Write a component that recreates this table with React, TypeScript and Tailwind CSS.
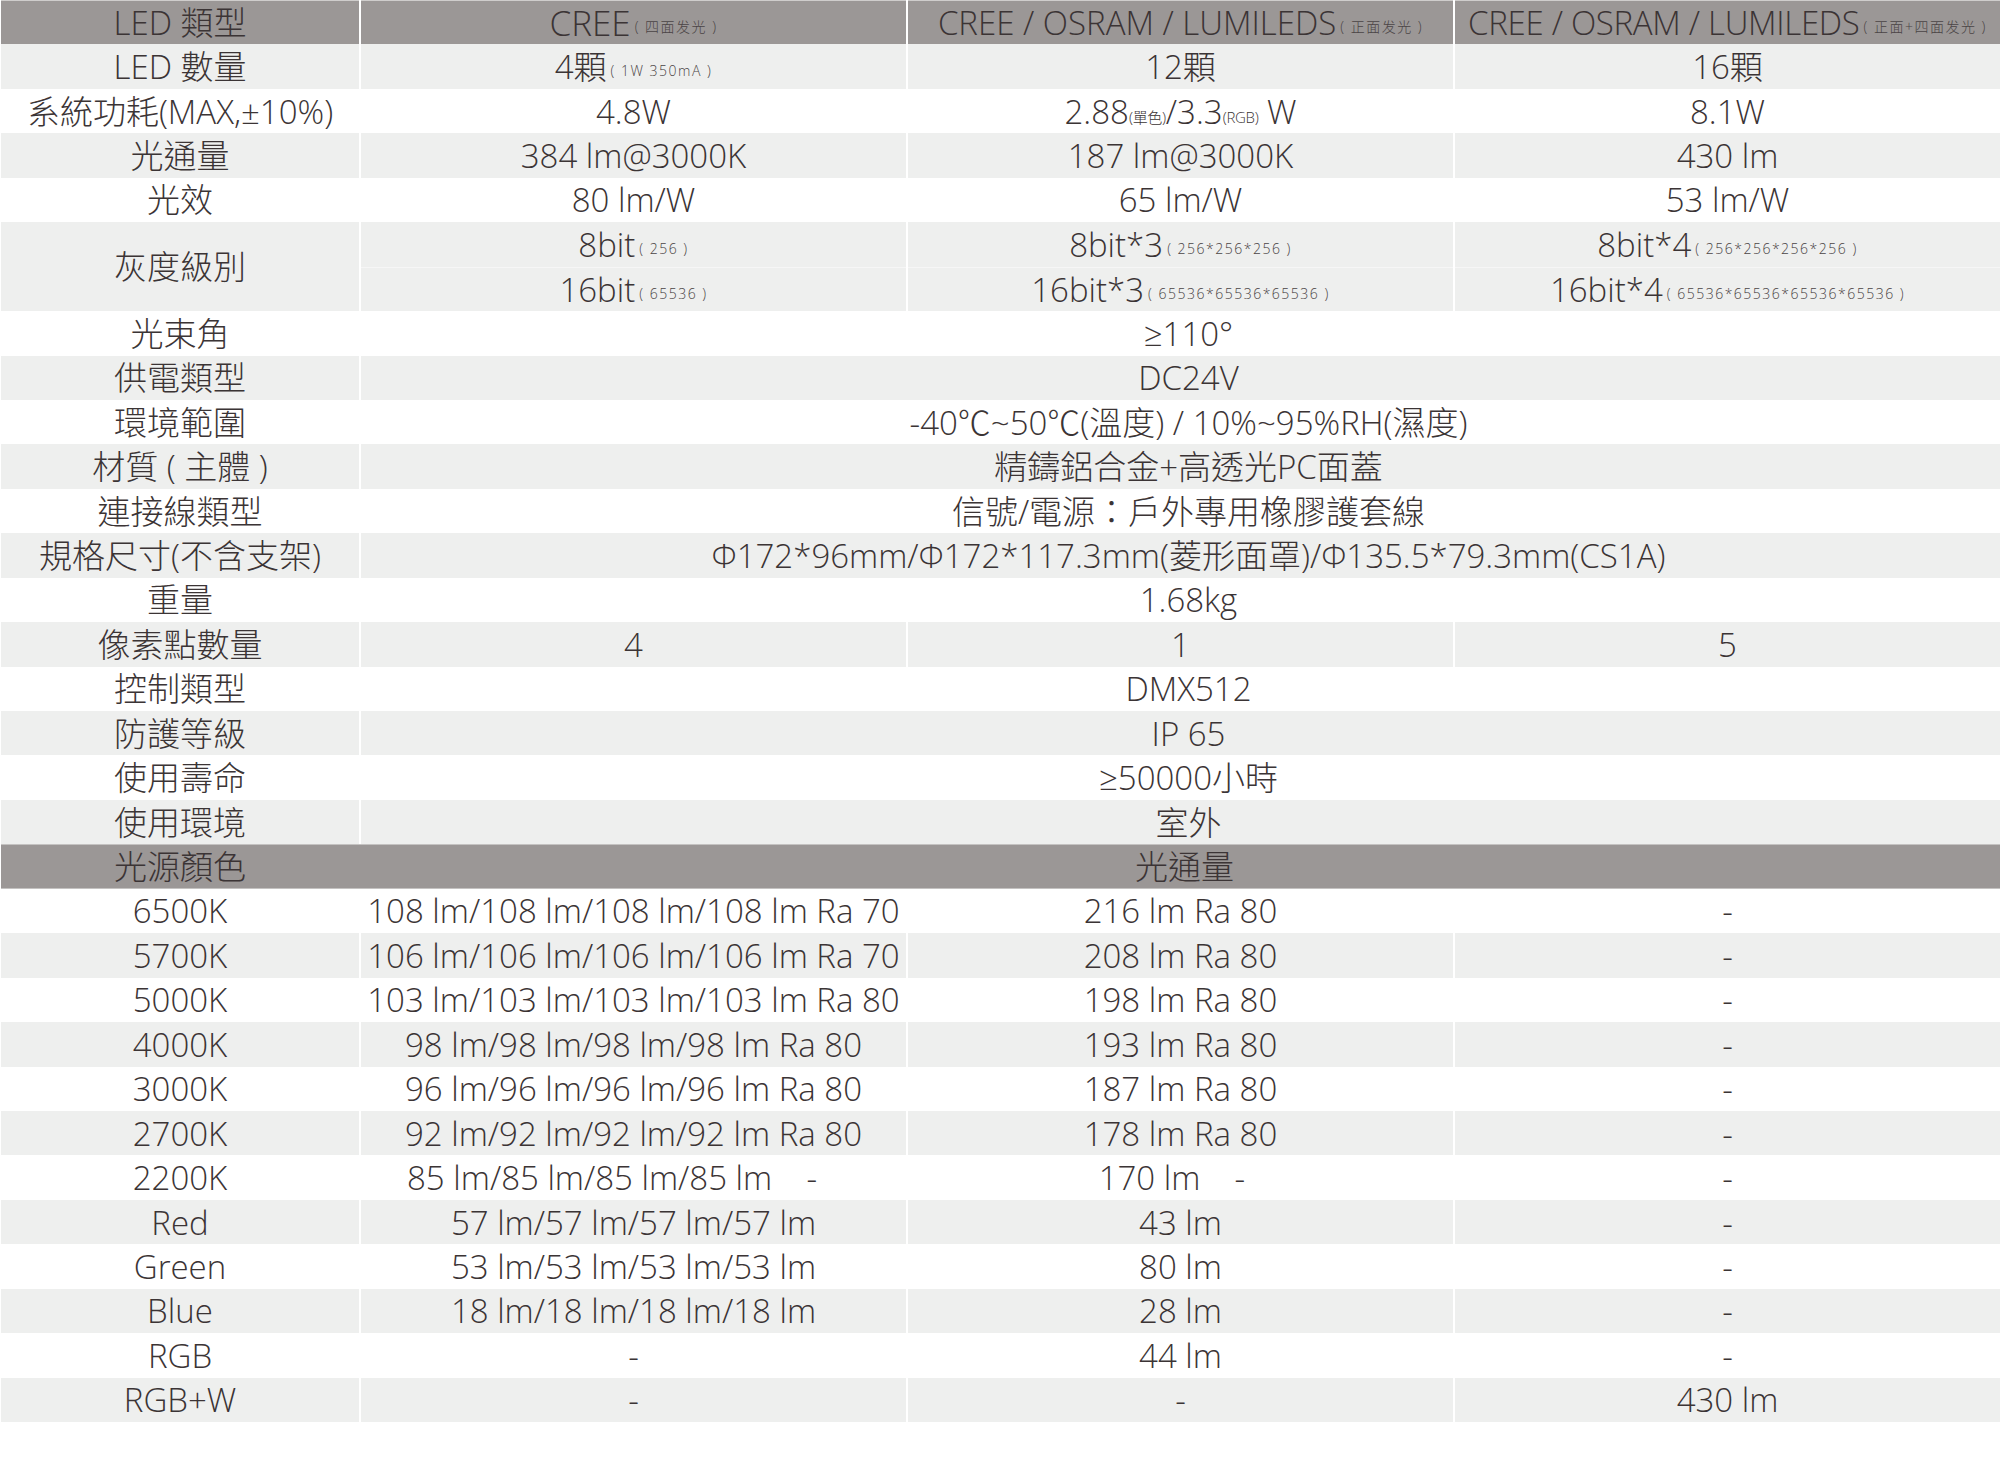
import type { ReactNode } from 'react';

const GRAY = 'bg-[#eeefee]';
const HEAD = 'bg-[#9b9796]';

function Cell({
  children,
  bg,
  className = '',
}: {
  children?: ReactNode;
  bg?: string;
  className?: string;
}) {
  return (
    <div className={`flex items-center justify-center whitespace-pre ${bg ?? ''} ${className}`}>
      {children}
    </div>
  );
}

function Small({ children }: { children: ReactNode }) {
  return (
    <span className="text-[14px] tracking-[1.5px] ml-[4px] mt-[9px] text-[#4a4445]">
      {children}
    </span>
  );
}

function Sub({ children }: { children: ReactNode }) {
  return <span className="text-[15px] self-end mb-[8px] tracking-[-0.3px]">{children}</span>;
}

export default function App() {
  const merged: [string, ReactNode][] = [
    ['光束角', '≥110°'],
    ['供電類型', 'DC24V'],
    ['環境範圍', '-40℃~50℃(溫度) / 10%~95%RH(濕度)'],
    ['材質 ( 主體 )', '精鑄鋁合金+高透光PC面蓋'],
    ['連接線類型', '信號/電源：戶外專用橡膠護套線'],
    ['規格尺寸(不含支架)', 'Φ172*96mm/Φ172*117.3mm(菱形面罩)/Φ135.5*79.3mm(CS1A)'],
    ['重量', '1.68kg'],
  ];

  const tail: [string, string][] = [
    ['控制類型', 'DMX512'],
    ['防護等級', 'IP 65'],
    ['使用壽命', '≥50000小時'],
    ['使用環境', '室外'],
  ];

  const colours: [string, string, string, string][] = [
    ['6500K', '108 lm/108 lm/108 lm/108 lm Ra 70', '216 lm Ra 80', '-'],
    ['5700K', '106 lm/106 lm/106 lm/106 lm Ra 70', '208 lm Ra 80', '-'],
    ['5000K', '103 lm/103 lm/103 lm/103 lm Ra 80', '198 lm Ra 80', '-'],
    ['4000K', '98 lm/98 lm/98 lm/98 lm Ra 80', '193 lm Ra 80', '-'],
    ['3000K', '96 lm/96 lm/96 lm/96 lm Ra 80', '187 lm Ra 80', '-'],
    ['2700K', '92 lm/92 lm/92 lm/92 lm Ra 80', '178 lm Ra 80', '-'],
    ['2200K', '85 lm/85 lm/85 lm/85 lm    -     ', '170 lm    -  ', '-'],
    ['Red', '57 lm/57 lm/57 lm/57 lm', '43 lm', '-'],
    ['Green', '53 lm/53 lm/53 lm/53 lm', '80 lm', '-'],
    ['Blue', '18 lm/18 lm/18 lm/18 lm', '28 lm', '-'],
    ['RGB', '-', '44 lm', '-'],
    ['RGB+W', '-', '-', '430 lm'],
  ];

  return (
    <div className="w-[2002px] h-[1475px] bg-white pl-[1px] font-['Open_Sans','Noto_Sans_CJK_TC',sans-serif] font-light text-[33px] leading-none text-[#3b3435]">
      <div className="grid grid-cols-[358px_545px_545px_545px] gap-x-[2px] auto-rows-[44.45px]">
        {/* header */}
        <Cell bg={HEAD} className="border-t border-[#cfcdcc]">LED 類型</Cell>
        <Cell bg={HEAD} className="border-t border-[#cfcdcc]">
          <span className="text-[35px]">CREE</span>
          <Small>( 四面发光 )</Small>
        </Cell>
        <Cell bg={HEAD} className="border-t border-[#cfcdcc]">
          CREE / OSRAM / LUMILEDS<Small>( 正面发光 )</Small>
        </Cell>
        <Cell bg={HEAD} className="border-t border-[#cfcdcc] tracking-[-0.3px]">
          CREE / OSRAM / LUMILEDS<Small>( 正面+四面发光 )</Small>
        </Cell>

        <Cell bg={GRAY}>LED 數量</Cell>
        <Cell bg={GRAY}>4顆<Small>( 1W 350mA )</Small></Cell>
        <Cell bg={GRAY}>12顆</Cell>
        <Cell bg={GRAY}>16顆</Cell>

        <Cell>系統功耗(MAX,±10%)</Cell>
        <Cell>4.8W</Cell>
        <Cell>
          2.88<Sub>(單色)</Sub>/3.3<Sub>(RGB)</Sub> W
        </Cell>
        <Cell>8.1W</Cell>

        <Cell bg={GRAY}>光通量</Cell>
        <Cell bg={GRAY}>384 lm@3000K</Cell>
        <Cell bg={GRAY}>187 lm@3000K</Cell>
        <Cell bg={GRAY}>430 lm</Cell>

        <Cell>光效</Cell>
        <Cell>80 lm/W</Cell>
        <Cell>65 lm/W</Cell>
        <Cell>53 lm/W</Cell>

        <Cell bg={GRAY} className="row-span-2">灰度級別</Cell>
        <Cell bg={GRAY}>8bit<Small>( 256 )</Small></Cell>
        <Cell bg={GRAY}>8bit*3<Small>( 256*256*256 )</Small></Cell>
        <Cell bg={GRAY}>8bit*4<Small>( 256*256*256*256 )</Small></Cell>
        <Cell bg={GRAY} className="border-t border-[#f6f6f6]">16bit<Small>( 65536 )</Small></Cell>
        <Cell bg={GRAY} className="border-t border-[#f6f6f6]">16bit*3<Small>( 65536*65536*65536 )</Small></Cell>
        <Cell bg={GRAY} className="border-t border-[#f6f6f6]">16bit*4<Small>( 65536*65536*65536*65536 )</Small></Cell>

        {merged.map(([label, value], i) => (
          <Row key={label} label={label} value={value} gray={i % 2 === 1} />
        ))}

        <Cell bg={GRAY}>像素點數量</Cell>
        <Cell bg={GRAY}>4</Cell>
        <Cell bg={GRAY}>1</Cell>
        <Cell bg={GRAY}>5</Cell>

        {tail.map(([label, value], i) => (
          <Row key={label} label={label} value={value} gray={i % 2 === 1} />
        ))}

        {/* light source header */}
        <Cell bg={HEAD} className="border-y border-[#c4c2c1]">光源顏色</Cell>
        <Cell bg={HEAD} className="col-span-3 border-y border-[#c4c2c1] -ml-[2px] pl-[10px]">光通量</Cell>

        {colours.map(([name, a, b, c], i) => {
          const bg = i % 2 === 1 ? GRAY : '';
          return [
            <Cell key={name + '0'} bg={bg}>{name}</Cell>,
            <Cell key={name + '1'} bg={bg}>{a}</Cell>,
            <Cell key={name + '2'} bg={bg}>{b}</Cell>,
            <Cell key={name + '3'} bg={bg}>{c}</Cell>,
          ];
        })}
      </div>
    </div>
  );
}

function Row({ label, value, gray }: { label: string; value: ReactNode; gray: boolean }) {
  const bg = gray ? GRAY : '';
  return (
    <>
      <Cell bg={bg}>{label}</Cell>
      <Cell bg={bg} className="col-span-3 pl-[16px]">{value}</Cell>
    </>
  );
}
